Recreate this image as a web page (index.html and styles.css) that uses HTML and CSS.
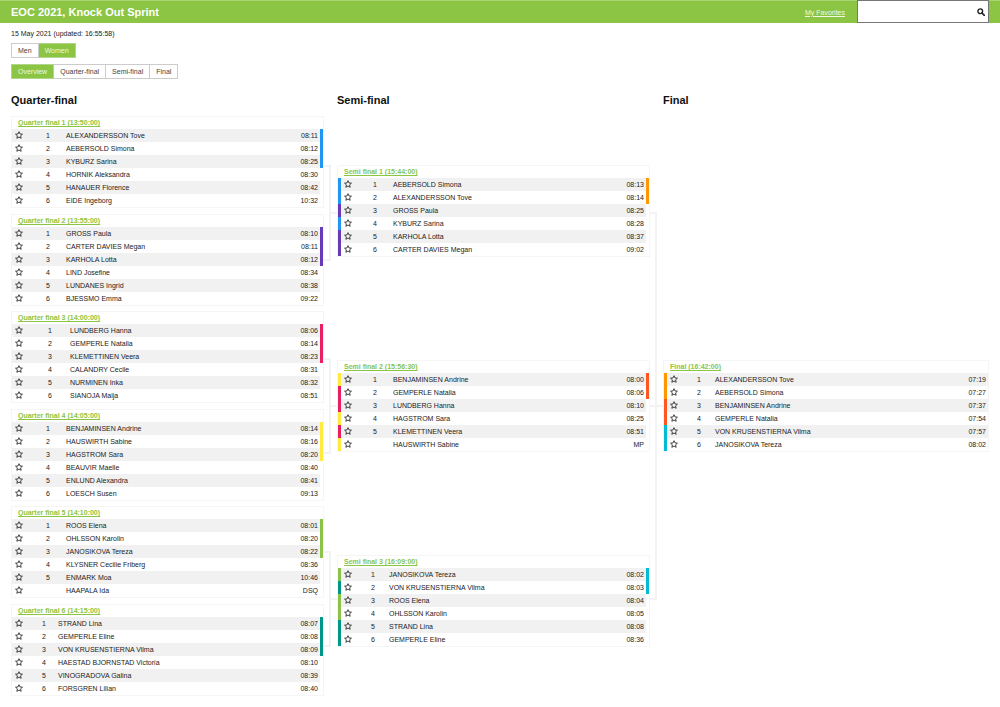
FILE: index.html
```
<!DOCTYPE html>
<html lang="en">
<head>
<meta charset="utf-8">
<meta name="viewport" content="width=device-width, initial-scale=1">
<title>EOC 2021, Knock Out Sprint</title>
<link rel="stylesheet" href="styles.css">
</head>
<body>
<header class="topbar">
  <h1 class="topbar-title">EOC 2021, Knock Out Sprint</h1>
  <a class="topbar-link" href="#favorites">My Favorites</a>
  <form class="search" role="search">
    <input class="search-input" type="text" aria-label="Search">
    <button class="search-button" type="button" aria-label="Search">
      <svg viewBox="0 0 16 16" width="8" height="8" aria-hidden="true"><circle cx="6.5" cy="6.5" r="4.7" fill="none" stroke="#222" stroke-width="2.8"/><path d="M10 10l4.6 4.6" stroke="#222" stroke-width="3.4" stroke-linecap="round"/></svg>
    </button>
  </form>
</header>
<main class="page">
  <p class="updated">15 May 2021 (updated: 16:55:58)</p>
  <nav class="tabs" aria-label="Class">
    <button class="tab" type="button">Men</button>
    <button class="tab tab-active" type="button">Women</button>
  </nav>
  <nav class="tabs" aria-label="Round">
    <button class="tab tab-active" type="button">Overview</button>
    <button class="tab" type="button">Quarter-final</button>
    <button class="tab" type="button">Semi-final</button>
    <button class="tab" type="button">Final</button>
  </nav>
  <div class="bracket">
    <section class="round">
      <h2 class="round-title">Quarter-final</h2>
      <div class="round-body">
        <div class="groups">
          <div class="group" id="group-1"></div>
          <div class="group" id="group-2"></div>
          <div class="group" id="group-3"></div>
        </div>
        <div class="links links-quarter" aria-hidden="true">
          <div class="link"><i class="link-arm"></i><i class="link-out"></i></div>
          <div class="link"><i class="link-arm"></i><i class="link-out"></i></div>
          <div class="link"><i class="link-arm"></i><i class="link-out"></i></div>
        </div>
      </div>
    </section>
    <section class="round">
      <h2 class="round-title">Semi-final</h2>
      <div class="round-body">
        <div class="groups" id="semis"></div>
        <div class="links links-semi" aria-hidden="true">
          <div class="link link-tall"><i class="link-arm"></i><i class="link-through"></i></div>
        </div>
      </div>
    </section>
    <section class="round">
      <h2 class="round-title">Final</h2>
      <div class="round-body">
        <div class="groups groups-final" id="final"></div>
      </div>
    </section>
  </div>
</main>
<script src="app.js"></script>
</body>
</html>
```
FILE: styles.css
```
* { box-sizing: border-box; }

body {
  margin: 0;
  background: #fff;
  color: #222;
  font-family: "Liberation Sans", Arial, sans-serif;
  font-size: 7px;
  line-height: 9px;
}

h1, h2, p { margin: 0; }

button, input {
  font: inherit;
  color: inherit;
  margin: 0;
  border-radius: 0;
}

.topbar {
  display: flex;
  align-items: center;
  height: 23px;
  padding: 0 11px;
  background: #8bc543;
  border-top: 1px solid #a9d474;
  color: #fff;
}

.topbar-title {
  flex: 1;
  font-size: 11px;
  line-height: 13px;
}

.topbar-link {
  margin-right: 12px;
  color: #f1f8e6;
}

.search {
  display: flex;
  align-self: stretch;
  width: 132px;
  margin-top: -1px;
  background: #fff;
  border: 1px solid #767676;
}

.search-input {
  flex: 1;
  min-width: 0;
  padding: 0 4px;
  border: 0;
  background: transparent;
  color: #222;
}

.search-button {
  display: grid;
  place-items: center;
  width: 14px;
  padding: 0;
  border: 0;
  background: transparent;
}

.page { padding: 6px 11px 12px; }

.updated { margin-bottom: 5px; }

.tabs {
  display: flex;
  margin-bottom: 6px;
}

.tab {
  height: 15px;
  padding: 0 6px;
  border: 1px solid #ccc;
  background: #fff;
  color: #444;
}

.tab + .tab { border-left: 0; }

.tab-active {
  background: #8bc543;
  border-color: #b2d58c;
  color: #eef7e2;
}

.bracket {
  display: grid;
  grid-template-columns: repeat(3, 1fr);
  margin-top: 15px;
}

.round {
  display: flex;
  flex-direction: column;
}

.round-title {
  margin-bottom: 9px;
  color: #111;
  font-size: 11px;
  line-height: 13px;
}

.round-body {
  display: flex;
  flex: 1;
}

.groups {
  display: grid;
  flex: 1;
  grid-auto-rows: 1fr;
  align-items: center;
  gap: 5px;
}

.group {
  display: grid;
  gap: 6px;
}

.heat { border: 1px solid #f5f5f5; }

.heat-title {
  display: block;
  padding: 1px 6px;
  line-height: 10px;
  color: #8bc543;
  font-weight: bold;
}

.results {
  width: 100%;
  table-layout: fixed;
  border-collapse: collapse;
}

.results td {
  height: 13px;
  padding: 0 0 1px;
  white-space: nowrap;
}

.results tr:nth-child(odd) { background: #f1f1f1; }

.col-star { width: 18px; }
.has-origin .col-star { width: 16px; }
.col-rank { width: 36px; }
.rank-narrow .col-rank { width: 28px; }
.rank-medium .col-rank { width: 32px; }
.rank-wide .col-rank { width: 40px; }
.col-time { width: 32px; }
.col-bar { width: 3px; }

.results .cell-rank { text-align: center; }

.results .cell-time {
  padding-right: 2px;
  text-align: right;
}

.results .bar-none { background: #fff; }
.results .bar-blue { background: #2196f3; }
.results .bar-purple { background: #673ab7; }
.results .bar-pink { background: #e91e63; }
.results .bar-yellow { background: #ffeb3b; }
.results .bar-green { background: #8bc34a; }
.results .bar-teal { background: #009688; }
.results .bar-orange { background: #ff9800; }
.results .bar-red { background: #ff5722; }
.results .bar-cyan { background: #00bcd4; }

.star {
  display: block;
  width: 8px;
  height: 8px;
  margin-left: 3px;
  padding: 0;
  border: 0;
  background: transparent;
}

.star svg { display: block; }

.links { width: 13px; }

.links-quarter {
  display: grid;
  align-content: start;
  gap: 97px;
  padding-top: 49px;
}

.links-semi { padding-top: 96px; }

.link {
  display: flex;
  align-items: center;
  height: 96px;
}

.link-tall { height: 388px; }

.link-arm {
  align-self: stretch;
  width: 7px;
  border: 2px solid #f3f3f3;
  border-left: 0;
}

.link-out {
  width: 6px;
  height: 2px;
  background: #f3f3f3;
}

.link-through {
  flex: none;
  width: 13px;
  height: 2px;
  margin-left: -7px;
  background: #f3f3f3;
}
```
FILE: app.js
```
const STAR = '<svg viewBox="0 0 16 16" width="8" height="8"><path d="M8 1.4l2 4.5 4.9.5-3.7 3.3 1.1 4.9L8 12.1l-4.3 2.5 1.1-4.9L1.1 6.4l4.9-.5z" fill="none" stroke="#222" stroke-width="1.7" stroke-linejoin="round"/></svg>';

// Each result: [rank, name, time]. "to" colours the qualified rows,
// "from" lists the colour of the heat that each athlete came from.
const heats = [
  { into: "group-1", title: "Quarter final 1 (13:50:00)", to: ["blue", 3], rows: [
    ["1", "ALEXANDERSSON Tove", "08:11"], ["2", "AEBERSOLD Simona", "08:12"], ["3", "KYBURZ Sarina", "08:25"],
    ["4", "HORNIK Aleksandra", "08:30"], ["5", "HANAUER Florence", "08:42"], ["6", "EIDE Ingeborg", "10:32"]] },
  { into: "group-1", title: "Quarter final 2 (13:55:00)", to: ["purple", 3], rows: [
    ["1", "GROSS Paula", "08:10"], ["2", "CARTER DAVIES Megan", "08:11"], ["3", "KARHOLA Lotta", "08:12"],
    ["4", "LIND Josefine", "08:34"], ["5", "LUNDANES Ingrid", "08:38"], ["6", "BJESSMO Emma", "09:22"]] },
  { into: "group-2", title: "Quarter final 3 (14:00:00)", rank: "rank-wide", to: ["pink", 3], rows: [
    ["1", "LUNDBERG Hanna", "08:06"], ["2", "GEMPERLE Natalia", "08:14"], ["3", "KLEMETTINEN Veera", "08:23"],
    ["4", "CALANDRY Cecile", "08:31"], ["5", "NURMINEN Inka", "08:32"], ["6", "SIANOJA Maija", "08:51"]] },
  { into: "group-2", title: "Quarter final 4 (14:05:00)", to: ["yellow", 3], rows: [
    ["1", "BENJAMINSEN Andrine", "08:14"], ["2", "HAUSWIRTH Sabine", "08:16"], ["3", "HAGSTROM Sara", "08:20"],
    ["4", "BEAUVIR Maelle", "08:40"], ["5", "ENLUND Alexandra", "08:41"], ["6", "LOESCH Susen", "09:13"]] },
  { into: "group-3", title: "Quarter final 5 (14:10:00)", to: ["green", 3], rows: [
    ["1", "ROOS Elena", "08:01"], ["2", "OHLSSON Karolin", "08:20"], ["3", "JANOSIKOVA Tereza", "08:22"],
    ["4", "KLYSNER Cecilie Friberg", "08:36"], ["5", "ENMARK Moa", "10:46"], ["", "HAAPALA Ida", "DSQ"]] },
  { into: "group-3", title: "Quarter final 6 (14:15:00)", rank: "rank-narrow", to: ["teal", 3], rows: [
    ["1", "STRAND Lina", "08:07"], ["2", "GEMPERLE Eline", "08:08"], ["3", "VON KRUSENSTIERNA Vilma", "08:09"],
    ["4", "HAESTAD BJORNSTAD Victoria", "08:10"], ["5", "VINOGRADOVA Galina", "08:39"], ["6", "FORSGREN Lilian", "08:40"]] },
  { into: "semis", title: "Semi final 1 (15:44:00)", to: ["orange", 2],
    from: ["blue", "blue", "purple", "blue", "purple", "purple"], rows: [
    ["1", "AEBERSOLD Simona", "08:13"], ["2", "ALEXANDERSSON Tove", "08:14"], ["3", "GROSS Paula", "08:25"],
    ["4", "KYBURZ Sarina", "08:28"], ["5", "KARHOLA Lotta", "08:37"], ["6", "CARTER DAVIES Megan", "09:02"]] },
  { into: "semis", title: "Semi final 2 (15:56:30)", to: ["red", 2],
    from: ["yellow", "pink", "pink", "yellow", "pink", "yellow"], rows: [
    ["1", "BENJAMINSEN Andrine", "08:00"], ["2", "GEMPERLE Natalia", "08:06"], ["3", "LUNDBERG Hanna", "08:10"],
    ["4", "HAGSTROM Sara", "08:25"], ["5", "KLEMETTINEN Veera", "08:51"], ["", "HAUSWIRTH Sabine", "MP"]] },
  { into: "semis", title: "Semi final 3 (16:09:00)", rank: "rank-medium", to: ["cyan", 2],
    from: ["green", "teal", "green", "green", "teal", "teal"], rows: [
    ["1", "JANOSIKOVA Tereza", "08:02"], ["2", "VON KRUSENSTIERNA Vilma", "08:03"], ["3", "ROOS Elena", "08:04"],
    ["4", "OHLSSON Karolin", "08:05"], ["5", "STRAND Lina", "08:08"], ["6", "GEMPERLE Eline", "08:36"]] },
  { into: "final", title: "Final (16:42:00)", rank: "rank-medium",
    from: ["orange", "orange", "red", "red", "cyan", "cyan"], rows: [
    ["1", "ALEXANDERSSON Tove", "07:19"], ["2", "AEBERSOLD Simona", "07:27"], ["3", "BENJAMINSEN Andrine", "07:37"],
    ["4", "GEMPERLE Natalia", "07:54"], ["5", "VON KRUSENSTIERNA Vilma", "07:57"], ["6", "JANOSIKOVA Tereza", "08:02"]] },
];

for (const heat of heats) {
  const bar = (color) => `<td class="bar-${color}"></td>`;
  const rows = heat.rows.map(([rank, name, time], i) => `<tr>
    ${heat.from ? bar(heat.from[i]) : ""}
    <td><button class="star" type="button" aria-label="Add ${name} to favorites">${STAR}</button></td>
    <td class="cell-rank">${rank}</td><td>${name}</td><td class="cell-time">${time}</td>
    ${heat.to ? bar(i < heat.to[1] ? heat.to[0] : "none") : ""}</tr>`).join("");
  document.getElementById(heat.into).insertAdjacentHTML("beforeend", `
    <article class="heat ${heat.rank || ""} ${heat.from ? "has-origin" : ""}">
      <a class="heat-title" href="#heat">${heat.title}</a>
      <table class="results" aria-label="${heat.title}">
        <colgroup>${heat.from ? '<col class="col-bar">' : ""}<col class="col-star"><col class="col-rank"><col><col class="col-time">${heat.to ? '<col class="col-bar">' : ""}</colgroup>
        <tbody>${rows}</tbody>
      </table>
    </article>`);
}
```
